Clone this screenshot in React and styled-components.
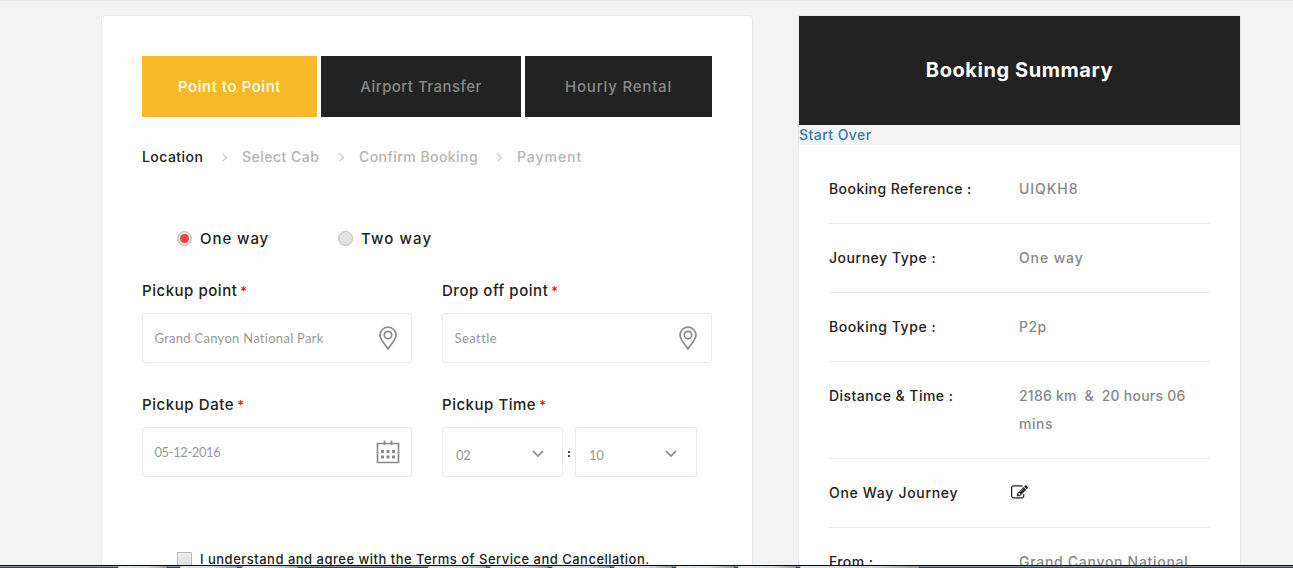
import React from "react";
import styled, { createGlobalStyle } from "styled-components";

const Global = createGlobalStyle`
  * { box-sizing: border-box; }
  body {
    margin: 0;
    background: #f3f3f3;
    color: #222;
    font-family: Inter, "Liberation Sans", sans-serif;
    font-weight: 500;
  }
`;

const Page = styled.div`
  height: 568px;
  overflow: hidden;
  border-top: 1px solid #e7e7e7;
  padding: 14px 52px 0 101px;
  display: flex;
  align-items: flex-start;
  justify-content: space-between;
`;

const Text = styled.span`
  white-space: pre;
  letter-spacing: ${(p) => p.$track || 0}px;
`;

const BookingPanel = styled.main`
  width: 652px;
  height: 640px;
  flex: none;
  padding: 40px;
  background: #fff;
  border: 1px solid #e9e9e9;
  border-radius: 4px;
`;

const Tabs = styled.nav`
  display: flex;
  gap: 4px;
`;

const Tab = styled.button`
  width: ${(p) => p.$width}px;
  height: 61px;
  padding: 0;
  border: 0;
  background: ${(p) => (p.$active ? "#f8b927" : "#222")};
  color: ${(p) => (p.$active ? "#fff" : "#888")};
  font: 500 15px Inter, sans-serif;
`;

const Steps = styled.ol`
  display: flex;
  align-items: center;
  margin: 30px 0 0;
  padding: 0;
  height: 20px;
  list-style: none;
  font-size: 14px;
  line-height: 20px;
`;

const Step = styled.li`
  width: ${(p) => p.$width}px;
  color: ${(p) => (p.$active ? "#222" : "#b4b4b4")};
`;

const StepArrow = styled.svg`
  flex: none;
  width: 7px;
  height: 9px;
  margin: 1px 14px 0 18px;
  fill: none;
  stroke: #c8c8c8;
  stroke-width: 1.2;
`;

const Options = styled.div`
  display: flex;
  height: 24px;
  margin: 59px 0 0 35px;
`;

const Option = styled.label`
  display: flex;
  align-items: center;
  width: 161px;
  gap: 8px;
  font-size: 15px;
`;

const RadioDot = styled.span`
  display: flex;
  align-items: center;
  justify-content: center;
  width: 15px;
  height: 15px;
  border: 1px solid #bbb;
  border-radius: 50%;
  background: linear-gradient(#e6e6e6, #dedede);

  &::after {
    content: "";
    width: 9px;
    height: 9px;
    border-radius: 50%;
    background: ${(p) => (p.$checked ? "#ee4648" : "transparent")};
  }
`;

const Fields = styled.div`
  display: grid;
  grid-template-columns: 270px 270px;
  gap: 30px;
  margin-top: 29px;
`;

const Field = styled.div`
  height: 84px;
`;

const FieldLabel = styled.div`
  height: 24px;
  margin-bottom: 10px;
  font-size: 15px;
  line-height: 24px;
`;

const Required = styled.span`
  margin-left: 3px;
  color: #f00;
  font-size: 13px;
`;

const InputBox = styled.div`
  display: flex;
  align-items: center;
  justify-content: space-between;
  width: ${(p) => p.$width || 270}px;
  height: 50px;
  padding: ${(p) => p.$pad || "0 12px 0 11.5px"};
  border: 1px solid #e9e9e9;
  border-radius: 3px;
  color: #999;
  font: 400 13px Lato, sans-serif;
`;

const FieldIcon = styled.svg`
  flex: none;
  width: 24px;
  height: 24px;
  margin-right: ${(p) => p.$shift || 0}px;
  fill: none;
  stroke: #8b8b8b;
  stroke-width: 1.7;
`;

const Chevron = styled.svg`
  width: 12px;
  height: 7px;
  margin-bottom: 2px;
  fill: none;
  stroke: #888;
  stroke-width: 1.7;
`;

const TimeRow = styled.div`
  display: flex;
  align-items: center;
`;

const Colon = styled.span`
  width: 12px;
  text-align: center;
  font-size: 12px;
  font-weight: 700;
`;

const Terms = styled.label`
  display: flex;
  align-items: center;
  gap: 8px;
  margin: 72px 0 0 35px;
  height: 20px;
  font-size: 13px;
`;

const Checkbox = styled.span`
  width: 15px;
  height: 15px;
  border: 1px solid #bbb;
  background: linear-gradient(#eee, #ddd);
`;

const Summary = styled.aside`
  width: 443px;
  height: 640px;
  flex: none;
  border: 1px solid #e9e9e9;
  background: #fff;
`;

const SummaryTitle = styled.h2`
  height: 109px;
  margin: 0;
  background: #222;
  color: #fff;
  text-align: center;
  font-size: 20px;
  font-weight: 700;
  line-height: 109px;
`;

const StartOver = styled.div`
  height: 20px;
  background: #f3f3f3;
  color: #337ab7;
  font-size: 14px;
  line-height: 20px;
`;

const Details = styled.dl`
  margin: 0;
  padding: 10px 30px;
`;

const DetailRow = styled.div`
  display: flex;
  padding: 20px 0;
  border-bottom: 1px solid #e9e9e9;
  font-size: 14px;
  line-height: 28px;
`;

const Term = styled.dt`
  width: 190px;
`;

const Value = styled.dd`
  display: flex;
  flex-direction: column;
  margin: 0;
  color: #888;
`;

const EditIcon = styled.svg`
  width: 17px;
  height: 17px;
  margin: 5px 0 0 -8px;
  fill: #222;
`;

const Taskbar = styled.footer`
  position: fixed;
  left: 0;
  right: 0;
  bottom: 0;
  height: 3px;
  display: flex;
  padding-left: 118px;
  border-top: 1px solid #0b0d10;
  background: linear-gradient(#8795a3 50%, #36485a 50%);
`;

const TaskButton = styled.span`
  flex: none;
  width: ${(p) => p.$width}px;
  margin-right: ${(p) => p.$after}px;
  border-radius: 2px 2px 0 0;
  background: linear-gradient(90deg, #e3e6e8, #d3d7db 60%, #929ca6);
  border-right: 1px solid #39424c;
`;

const PinIcon = () => (
  <FieldIcon viewBox="0 0 24 24" $shift={-1}>
    <path d="M12 23C9.800 19 4 14 4 9A8 7.800 0 0 1 20 9C20 14 14.200 19 12 23Z" />
    <circle cx="12" cy="9" r="3.700" />
  </FieldIcon>
);

const CalendarIcon = () => (
  <FieldIcon viewBox="0 0 24 24" $shift={-1}>
    <path d="M1.500 3.500H22.500V22.500H1.500ZM8.500 .5V5M15.500 .5V5" />
    <path d="M5 11.500H19M5 17H19" strokeWidth="3" strokeDasharray="3 2.500" />
  </FieldIcon>
);

const tabs = [
  ["Point to Point", 175, 0.57],
  ["Airport Transfer", 200, 0.45],
  ["Hourly Rental", 187, 0.8],
];

const steps = [
  ["Location", 61, 0.45],
  ["Select Cab", 78, 0.5],
  ["Confirm Booking", 119, 0.45],
  ["Payment", 66, 0.95],
];

const details = [
  ["Booking Reference :", 0.43, [["UIQKH8", 0.95]]],
  ["Journey Type :", 0.53, [["One way", 0.88]]],
  ["Booking Type :", 0.56, [["P2p", 0.4]]],
  ["Distance & Time :", 0.46, [["2186 km  &  20 hours 06", 0.22], ["mins", 0.55]]],
  ["One Way Journey", 0.69, null],
  ["From :", 0.4, [["Grand Canyon National", 0.71]]],
];

const taskButtons = [
  [50, 12], [58, 4], [57, 129], [59, 3], [59, 3], [59, 3], [59, 3], [59, 3], [59, 3], [120, 0],
];

const Labelled = ({ label, track, children }) => (
  <Field>
    <FieldLabel>
      <Text $track={track}>{label}</Text>
      <Required>*</Required>
    </FieldLabel>
    {children}
  </Field>
);

const TimeSelect = ({ value, width, pad }) => (
  <InputBox $width={width} $pad={pad}>
    <Text $track={-0.4}>{value}</Text>
    <Chevron viewBox="0 0 12 7">
      <path d="M1 1L6 6L11 1" />
    </Chevron>
  </InputBox>
);

export default function App() {
  return (
    <>
      <Global />
      <Page>
        <BookingPanel>
          <Tabs>
            {tabs.map(([name, width, track], i) => (
              <Tab key={name} $width={width} $active={i === 0}>
                <Text $track={track}>{name}</Text>
              </Tab>
            ))}
          </Tabs>
          <Steps>
            {steps.map(([name, width, track], i) => (
              <React.Fragment key={name}>
                {i > 0 && (
                  <StepArrow viewBox="0 0 7 9">
                    <path d="M1.500 .7L5.300 4.500L1.500 8.300" />
                  </StepArrow>
                )}
                <Step $width={width} $active={i === 0}>
                  <Text $track={track}>{name}</Text>
                </Step>
              </React.Fragment>
            ))}
          </Steps>
          <Options>
            <Option>
              <RadioDot $checked />
              <Text $track={0.93}>One way</Text>
            </Option>
            <Option>
              <RadioDot />
              <Text $track={1.1}>Two way</Text>
            </Option>
          </Options>
          <Fields>
            <Labelled label="Pickup point" track={0.53}>
              <InputBox>
                <Text $track={0.28}>Grand Canyon National Park</Text>
                <PinIcon />
              </InputBox>
            </Labelled>
            <Labelled label="Drop off point" track={0.54}>
              <InputBox>
                <Text $track={0.45}>Seattle</Text>
                <PinIcon />
              </InputBox>
            </Labelled>
            <Labelled label="Pickup Date" track={0.58}>
              <InputBox $pad="0 12px 0 11.5px">
                <Text $track={-0.42}>05-12-2016</Text>
                <CalendarIcon />
              </InputBox>
            </Labelled>
            <Labelled label="Pickup Time" track={0.52}>
              <TimeRow>
                <TimeSelect value="02" width={121} pad="5px 18px 0 13px" />
                <Colon>:</Colon>
                <TimeSelect value="10" width={122} pad="5px 19px 0 13px" />
              </TimeRow>
            </Labelled>
          </Fields>
          <Terms>
            <Checkbox />
            <Text $track={0.49}>
              I understand and agree with the Terms of Service and Cancellation.
            </Text>
          </Terms>
        </BookingPanel>
        <Summary>
          <SummaryTitle>
            <Text $track={0.57}>Booking Summary</Text>
          </SummaryTitle>
          <StartOver>
            <Text $track={0.45}>Start Over</Text>
          </StartOver>
          <Details>
            {details.map(([term, track, lines]) => (
              <DetailRow key={term}>
                <Term>
                  <Text $track={track}>{term}</Text>
                </Term>
                <Value>
                  {lines ? (
                    lines.map(([line, lineTrack]) => (
                      <Text key={line} $track={lineTrack}>{line}</Text>
                    ))
                  ) : (
                    <EditIcon viewBox="0 0 1792 1792">
                      <path d="M888 1184l116-116-152-152-116 116v56h96v96h56zm440-720q-16-16-33 1l-350 350q-17 17-1 33t33-1l350-350q17-17 1-33zm80 594v190q0 119-84.500 203.500t-203.500 84.500h-832q-119 0-203.500-84.500t-84.500-203.500v-832q0-119 84.500-203.500t203.500-84.500h832q63 0 117 25 15 7 18 23 3 17-9 29l-49 49q-14 14-32 8-23-6-45-6h-832q-66 0-113 47t-47 113v832q0 66 47 113t113 47h832q66 0 113-47t47-113v-126q0-13 9-22l64-64q15-15 35-7t20 29zm-96-738l288 288-672 672h-288v-288zm444 132l-92 92-288-288 92-92q28-28 68-28t68 28l152 152q28 28 28 68t-28 68z" />
                    </EditIcon>
                  )}
                </Value>
              </DetailRow>
            ))}
          </Details>
        </Summary>
      </Page>
      <Taskbar>
        {taskButtons.map(([width, after], i) => (
          <TaskButton key={i} $width={width} $after={after} />
        ))}
      </Taskbar>
    </>
  );
}
